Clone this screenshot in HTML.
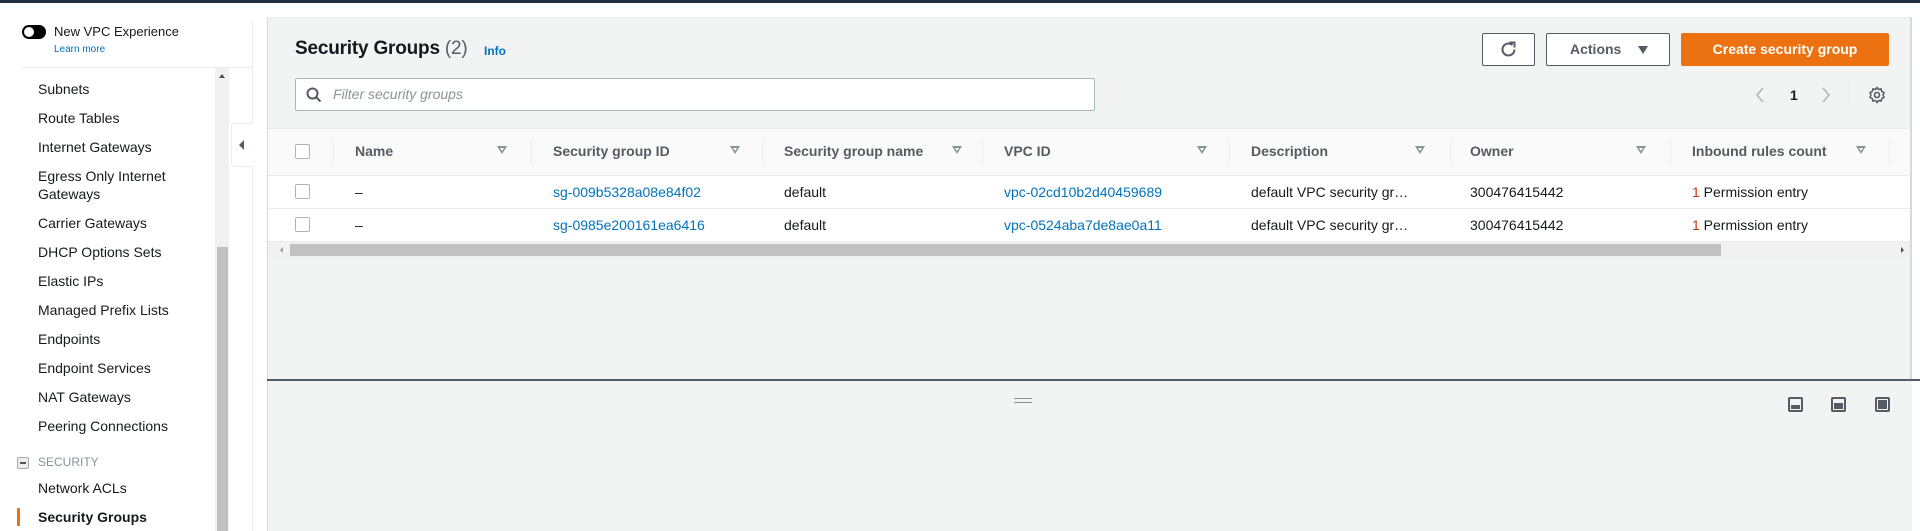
<!DOCTYPE html>
<html><head><meta charset="utf-8"><style>
*{margin:0;padding:0;box-sizing:border-box}
body{width:1920px;height:531px;overflow:hidden;background:#fff;font-family:"Liberation Sans",Arial,sans-serif;position:relative;color:#16191f}
.a{position:absolute;white-space:nowrap}
.nav{position:absolute;left:38px;font-size:14px;color:#16191f;line-height:18px}
.hd{position:absolute;top:143px;font-size:14px;font-weight:bold;color:#545b64}
.fi{position:absolute;top:146px;width:0;height:0;border-left:5px solid transparent;border-right:5px solid transparent;border-top:8px solid #879596}
.fi:after{content:"";position:absolute;left:-2px;top:-6px;border-left:2px solid transparent;border-right:2px solid transparent;border-top:3px solid #fff}
.sep{position:absolute;top:140px;width:1px;height:24px;background:#eaeded}
.cb{position:absolute;left:295px;width:15px;height:15px;border:1px solid #aab7b8;border-radius:2px;background:#fff}
.c{position:absolute;font-size:14px;color:#16191f}
.lk{color:#0073bb}
</style></head><body>
<div class="a" style="left:0;top:0;width:1920px;height:3px;background:#232f3e"></div>
<div class="a" style="left:22px;top:25px;width:24px;height:14px;border-radius:7px;background:#000"></div>
<div class="a" style="left:24px;top:27px;width:10px;height:10px;border-radius:5px;background:#fff"></div>
<div class="a" style="left:54px;top:24px;font-size:13px;color:#16191f">New VPC Experience</div>
<div class="a" style="left:54px;top:44px;font-size:10px;color:#0073bb">Learn more</div>
<div class="a" style="left:22px;top:67px;width:230px;height:1px;background:#eaeded"></div>
<div class="a" style="left:252px;top:20px;width:1px;height:511px;background:#eaeded"></div>
<div class="a" style="left:215px;top:68px;width:14px;height:463px;background:#f1f1f1"></div>
<div class="a" style="left:217px;top:247px;width:11px;height:284px;background:#c1c1c1"></div>
<div class="a" style="left:219px;top:74px;border-left:3px solid transparent;border-right:3px solid transparent;border-bottom:4px solid #505050"></div>
<div class="a" style="left:231px;top:123px;width:22px;height:44px;border:1px solid #eaeded;border-right:none;border-radius:4px 0 0 4px;background:#fff"></div>
<div class="a" style="left:239px;top:140px;border-top:5px solid transparent;border-bottom:5px solid transparent;border-right:5px solid #545b64"></div>
<div class="nav" style="top:80px">Subnets</div>
<div class="nav" style="top:109px">Route Tables</div>
<div class="nav" style="top:138px">Internet Gateways</div>
<div class="nav" style="top:167px">Egress Only Internet<br>Gateways</div>
<div class="nav" style="top:214px">Carrier Gateways</div>
<div class="nav" style="top:243px">DHCP Options Sets</div>
<div class="nav" style="top:272px">Elastic IPs</div>
<div class="nav" style="top:301px">Managed Prefix Lists</div>
<div class="nav" style="top:330px">Endpoints</div>
<div class="nav" style="top:359px">Endpoint Services</div>
<div class="nav" style="top:388px">NAT Gateways</div>
<div class="nav" style="top:417px">Peering Connections</div>
<div class="a" style="left:17px;top:457px;width:12px;height:12px;border:1px solid #aaa;background:#eee;border-radius:2px"></div>
<div class="a" style="left:20px;top:462px;width:6px;height:2px;background:#555"></div>
<div class="a" style="left:38px;top:455px;font-size:12px;color:#879596">SECURITY</div>
<div class="nav" style="top:479px">Network ACLs</div>
<div class="a" style="left:17px;top:508px;width:3px;height:18px;background:#ec7211"></div>
<div class="nav" style="top:508px;font-weight:bold">Security Groups</div>
<div class="a" style="left:267px;top:17px;width:1645px;height:514px;background:#f2f3f3;border-left:1px solid #d5dbdb;border-top:1px solid #eaeded"></div>
<div class="a" style="left:1910px;top:17px;width:2px;height:363px;background:#d5dbdb"></div>
<div class="a" style="left:295px;top:38px;font-size:19px;font-weight:bold;color:#16191f;letter-spacing:-0.2px">Security Groups <span style="font-weight:normal;color:#545b64">(2)</span></div>
<div class="a" style="left:484px;top:44px;font-size:12px;font-weight:bold;color:#0073bb">Info</div>
<div class="a" style="left:295px;top:78px;width:800px;height:33px;border:1px solid #aab7b8;border-radius:2px;background:#fff"></div>
<svg class="a" style="left:306px;top:87px" width="16" height="16" viewBox="0 0 16 16"><circle cx="6.5" cy="6.5" r="5" fill="none" stroke="#545b64" stroke-width="2"/><path d="M10 10l4.5 4.5" stroke="#545b64" stroke-width="2"/></svg>
<div class="a" style="left:333px;top:86px;font-size:14px;font-style:italic;color:#879596">Filter security groups</div>
<div class="a" style="left:1482px;top:33px;width:53px;height:33px;border:1px solid #545b64;border-radius:2px;background:#fff"></div>
<svg class="a" style="left:1499px;top:40px" width="20" height="20" viewBox="0 0 20 20"><path d="M15.5 9.5a6 6 0 1 1-2-4.5" fill="none" stroke="#545b64" stroke-width="2"/><path d="M10.5 2.5h5v5" fill="none" stroke="#545b64" stroke-width="2"/></svg>
<div class="a" style="left:1546px;top:33px;width:124px;height:33px;border:1px solid #545b64;border-radius:2px;background:#fff"></div>
<div class="a" style="left:1570px;top:41px;font-size:14px;font-weight:bold;color:#545b64">Actions</div>
<div class="a" style="left:1638px;top:46px;border-left:5px solid transparent;border-right:5px solid transparent;border-top:8px solid #545b64"></div>
<div class="a" style="left:1681px;top:33px;width:208px;height:33px;border-radius:2px;background:#ec7211"></div>
<div class="a" style="left:1681px;top:41px;width:208px;text-align:center;font-size:14px;font-weight:bold;color:#fff">Create security group</div>
<svg class="a" style="left:1754px;top:86px" width="12" height="18"><path d="M9 2L3 9l6 7" fill="none" stroke="#aab7b8" stroke-width="1.5"/></svg>
<div class="a" style="left:1790px;top:87px;font-size:14px;font-weight:bold">1</div>
<svg class="a" style="left:1820px;top:86px" width="12" height="18"><path d="M3 2l6 7-6 7" fill="none" stroke="#aab7b8" stroke-width="1.5"/></svg>
<div class="a" style="left:1849px;top:78px;width:1px;height:32px;background:#eaeded"></div>
<svg class="a" style="left:1868px;top:86px" width="18" height="18" viewBox="0 0 18 18"><circle cx="9" cy="9" r="2.5" fill="none" stroke="#545b64" stroke-width="1.6"/><path d="M9 1.5l1.6 2 2.5-.6.6 2.5 2.3 1.2-1 2.4 1 2.4-2.3 1.2-.6 2.5-2.5-.6L9 16.5l-1.6-2-2.5.6-.6-2.5L2 11.4 3 9 2 6.6l2.3-1.2.6-2.5 2.5.6z" fill="none" stroke="#545b64" stroke-width="1.5"/></svg>
<div class="a" style="left:268px;top:128px;width:1642px;height:48px;background:#fafafa;border-top:1px solid #eaeded;border-bottom:1px solid #eaeded"></div>
<div class="cb" style="top:144px"></div>
<div class="hd" style="left:355px">Name</div><div class="fi" style="left:497px"></div><div class="sep" style="left:333px"></div>
<div class="hd" style="left:553px">Security group ID</div><div class="fi" style="left:730px"></div><div class="sep" style="left:531px"></div>
<div class="hd" style="left:784px">Security group name</div><div class="fi" style="left:952px"></div><div class="sep" style="left:762px"></div>
<div class="hd" style="left:1004px">VPC ID</div><div class="fi" style="left:1197px"></div><div class="sep" style="left:982px"></div>
<div class="hd" style="left:1251px">Description</div><div class="fi" style="left:1415px"></div><div class="sep" style="left:1229px"></div>
<div class="hd" style="left:1470px">Owner</div><div class="fi" style="left:1636px"></div><div class="sep" style="left:1450px"></div>
<div class="hd" style="left:1692px">Inbound rules count</div><div class="fi" style="left:1856px"></div><div class="sep" style="left:1670px"></div>
<div class="sep" style="left:1889px"></div>
<div class="a" style="left:268px;top:176px;width:1642px;height:65px;background:#fff"></div>
<div class="a" style="left:268px;top:208px;width:1642px;height:1px;background:#eaeded"></div>
<div class="a" style="left:268px;top:241px;width:1642px;height:1px;background:#eaeded"></div>
<div class="cb" style="top:184px"></div><div class="cb" style="top:217px"></div>
<div class="c" style="left:355px;top:184px">–</div><div class="c" style="left:355px;top:217px">–</div>
<div class="c lk" style="left:553px;top:184px">sg-009b5328a08e84f02</div><div class="c lk" style="left:553px;top:217px">sg-0985e200161ea6416</div>
<div class="c" style="left:784px;top:184px">default</div><div class="c" style="left:784px;top:217px">default</div>
<div class="c lk" style="left:1004px;top:184px">vpc-02cd10b2d40459689</div><div class="c lk" style="left:1004px;top:217px">vpc-0524aba7de8ae0a11</div>
<div class="c" style="left:1251px;top:184px">default VPC security gr…</div><div class="c" style="left:1251px;top:217px">default VPC security gr…</div>
<div class="c" style="left:1470px;top:184px">300476415442</div><div class="c" style="left:1470px;top:217px">300476415442</div>
<div class="c" style="left:1692px;top:184px"><span style="color:#d13212">1</span> Permission entry</div><div class="c" style="left:1692px;top:217px"><span style="color:#d13212">1</span> Permission entry</div>
<div class="a" style="left:268px;top:242px;width:1642px;height:16px;background:#f1f1f1"></div>
<div class="a" style="left:290px;top:244px;width:1431px;height:12px;background:#c1c1c1"></div>
<div class="a" style="left:280px;top:247px;border-top:3px solid transparent;border-bottom:3px solid transparent;border-right:3px solid #a0a0a0"></div>
<div class="a" style="left:1901px;top:247px;border-top:3px solid transparent;border-bottom:3px solid transparent;border-left:3px solid #505050"></div>
<div class="a" style="left:267px;top:379px;width:1653px;height:2px;background:#545b64"></div>
<div class="a" style="left:1014px;top:398px;width:18px;height:1px;background:#879596"></div>
<div class="a" style="left:1014px;top:402px;width:18px;height:1px;background:#879596"></div>
<div class="a" style="left:1788px;top:397px;width:15px;height:15px;border:2px solid #545b64;border-radius:2px"></div><div class="a" style="left:1791px;top:405px;width:9px;height:4px;background:#545b64"></div>
<div class="a" style="left:1831px;top:397px;width:15px;height:15px;border:2px solid #545b64;border-radius:2px"></div><div class="a" style="left:1834px;top:403px;width:9px;height:6px;background:#545b64"></div>
<div class="a" style="left:1875px;top:397px;width:15px;height:15px;border:2px solid #545b64;border-radius:2px"></div><div class="a" style="left:1878px;top:400px;width:9px;height:9px;background:#545b64"></div>
</body></html>
